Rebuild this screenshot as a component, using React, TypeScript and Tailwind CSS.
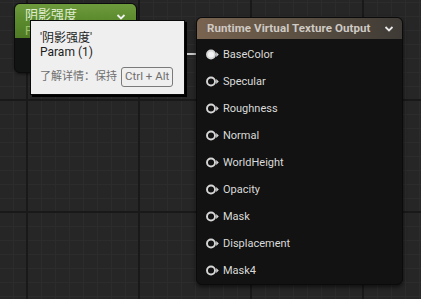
import React from "react";

const pins = ["BaseColor", "Specular", "Roughness", "Normal", "WorldHeight", "Opacity", "Mask", "Displacement", "Mask4"];

function Pin({ filled }: { filled: boolean }) {
  return (
    <svg width="14" height="11" viewBox="0 0 14 11" className="shrink-0">
      <circle cx="5" cy="5.5" r="4" fill={filled ? "#f2f2f2" : "none"} stroke="#d6d6d6" strokeWidth="1.9" />
      <path d="M10.2 3 L12.8 5.5 L10.2 8 Z" fill="#d6d6d6" />
    </svg>
  );
}

function Grid() {
  return (
    <svg className="absolute inset-0" width="421" height="299">
      <defs>
        <pattern id="minor" x="27" y="2" width="14" height="14" patternUnits="userSpaceOnUse">
          <rect width="14" height="14" fill="#262626" />
          <rect x="0" y="0" width="1" height="14" fill="#2c2c2c" />
          <rect x="0" y="0" width="14" height="1" fill="#2c2c2c" />
        </pattern>
        <pattern id="major" x="26" y="99" width="112" height="112" patternUnits="userSpaceOnUse">
          <rect x="0" y="0" width="2" height="112" fill="#191919" />
          <rect x="0" y="0" width="112" height="2" fill="#191919" />
        </pattern>
      </defs>
      <rect width="421" height="299" fill="url(#minor)" />
      <rect width="421" height="299" fill="url(#major)" />
    </svg>
  );
}

export default function App() {
  return (
    <div className="relative w-[421px] h-[299px] overflow-hidden bg-[#262626] font-['Roboto','Noto_Sans_CJK_SC',sans-serif]">
      <Grid />

      {/* green parameter node */}
      <div className="absolute left-[14px] top-[3px] w-[123px] h-[70px] rounded-[6px] overflow-hidden border border-[#0c0c0c] bg-[#121313] shadow-[0_1px_3px_rgba(0,0,0,0.6)]">
        <div className="h-[34px] bg-[linear-gradient(180deg,#6d9a3c_0%,#5a8a2c_50%,#4e7a24_100%)] px-[10px] pt-[2px]">
          <div className="flex items-center justify-between">
            <span className="text-[13px] leading-[18px] text-[#dfeccf]">阴影强度</span>
            <svg width="10" height="8" viewBox="0 0 10 8" className="mt-[3px]">
              <path d="M1.5 2 L5 5.5 L8.5 2" stroke="#f0f0f0" strokeWidth="1.8" fill="none" />
            </svg>
          </div>
          <div className="text-[12px] leading-[14px] text-[#9cc06a]">P</div>
        </div>
      </div>

      {/* wire */}
      <div className="absolute left-[185px] top-[53px] w-[22px] h-[2px] bg-[#c8c8c8]" />

      {/* output node */}
      <div className="absolute left-[196px] top-[17px] w-[207px] h-[268px] rounded-[6px] overflow-hidden border border-[#0b0b0b] bg-[#111211] shadow-[0_2px_4px_rgba(0,0,0,0.6)]">
        <div className="h-[21px] flex items-center justify-between pl-[10px] pr-[8px] bg-[linear-gradient(90deg,#7a6450_0%,#5e5244_45%,#3e3a35_100%)]">
          <span className="text-[11.5px] font-bold text-[#cfcac4] leading-none tracking-[0.1px]">Runtime Virtual Texture Output</span>
          <svg width="10" height="8" viewBox="0 0 10 8">
            <path d="M1.5 2 L5 5.5 L8.5 2" stroke="#e8e8e8" strokeWidth="1.8" fill="none" />
          </svg>
        </div>
        <div className="flex flex-col pt-[2px]">
          {pins.map((p, i) => (
            <div key={p} className="h-[27px] flex items-center gap-[3px] pl-[9px]">
              <Pin filled={i === 0} />
              <span className="text-[11px] text-[#dadada] leading-none">{p}</span>
            </div>
          ))}
        </div>
      </div>

      {/* tooltip */}
      <div className="absolute left-[30px] top-[20px] w-[155px] h-[75px] bg-[#efefef] border border-[#0a0a0a] shadow-[2px_2px_0_#000] px-[9px] pt-[10px]">
        <div className="text-[12px] leading-[14px] text-[#1c1c1c]">'阴影强度'</div>
        <div className="text-[12px] leading-[14px] text-[#1c1c1c]">Param (1)</div>
        <div className="mt-[8px] flex items-center gap-[4px]">
          <span className="text-[11px] text-[#6e6e6e] leading-none">了解详情：保持</span>
          <span className="text-[11.5px] text-[#6e6e6e] leading-none border border-[#7a7a7a] rounded-[3px] px-[3px] py-[3px]">Ctrl + Alt</span>
        </div>
      </div>
    </div>
  );
}
